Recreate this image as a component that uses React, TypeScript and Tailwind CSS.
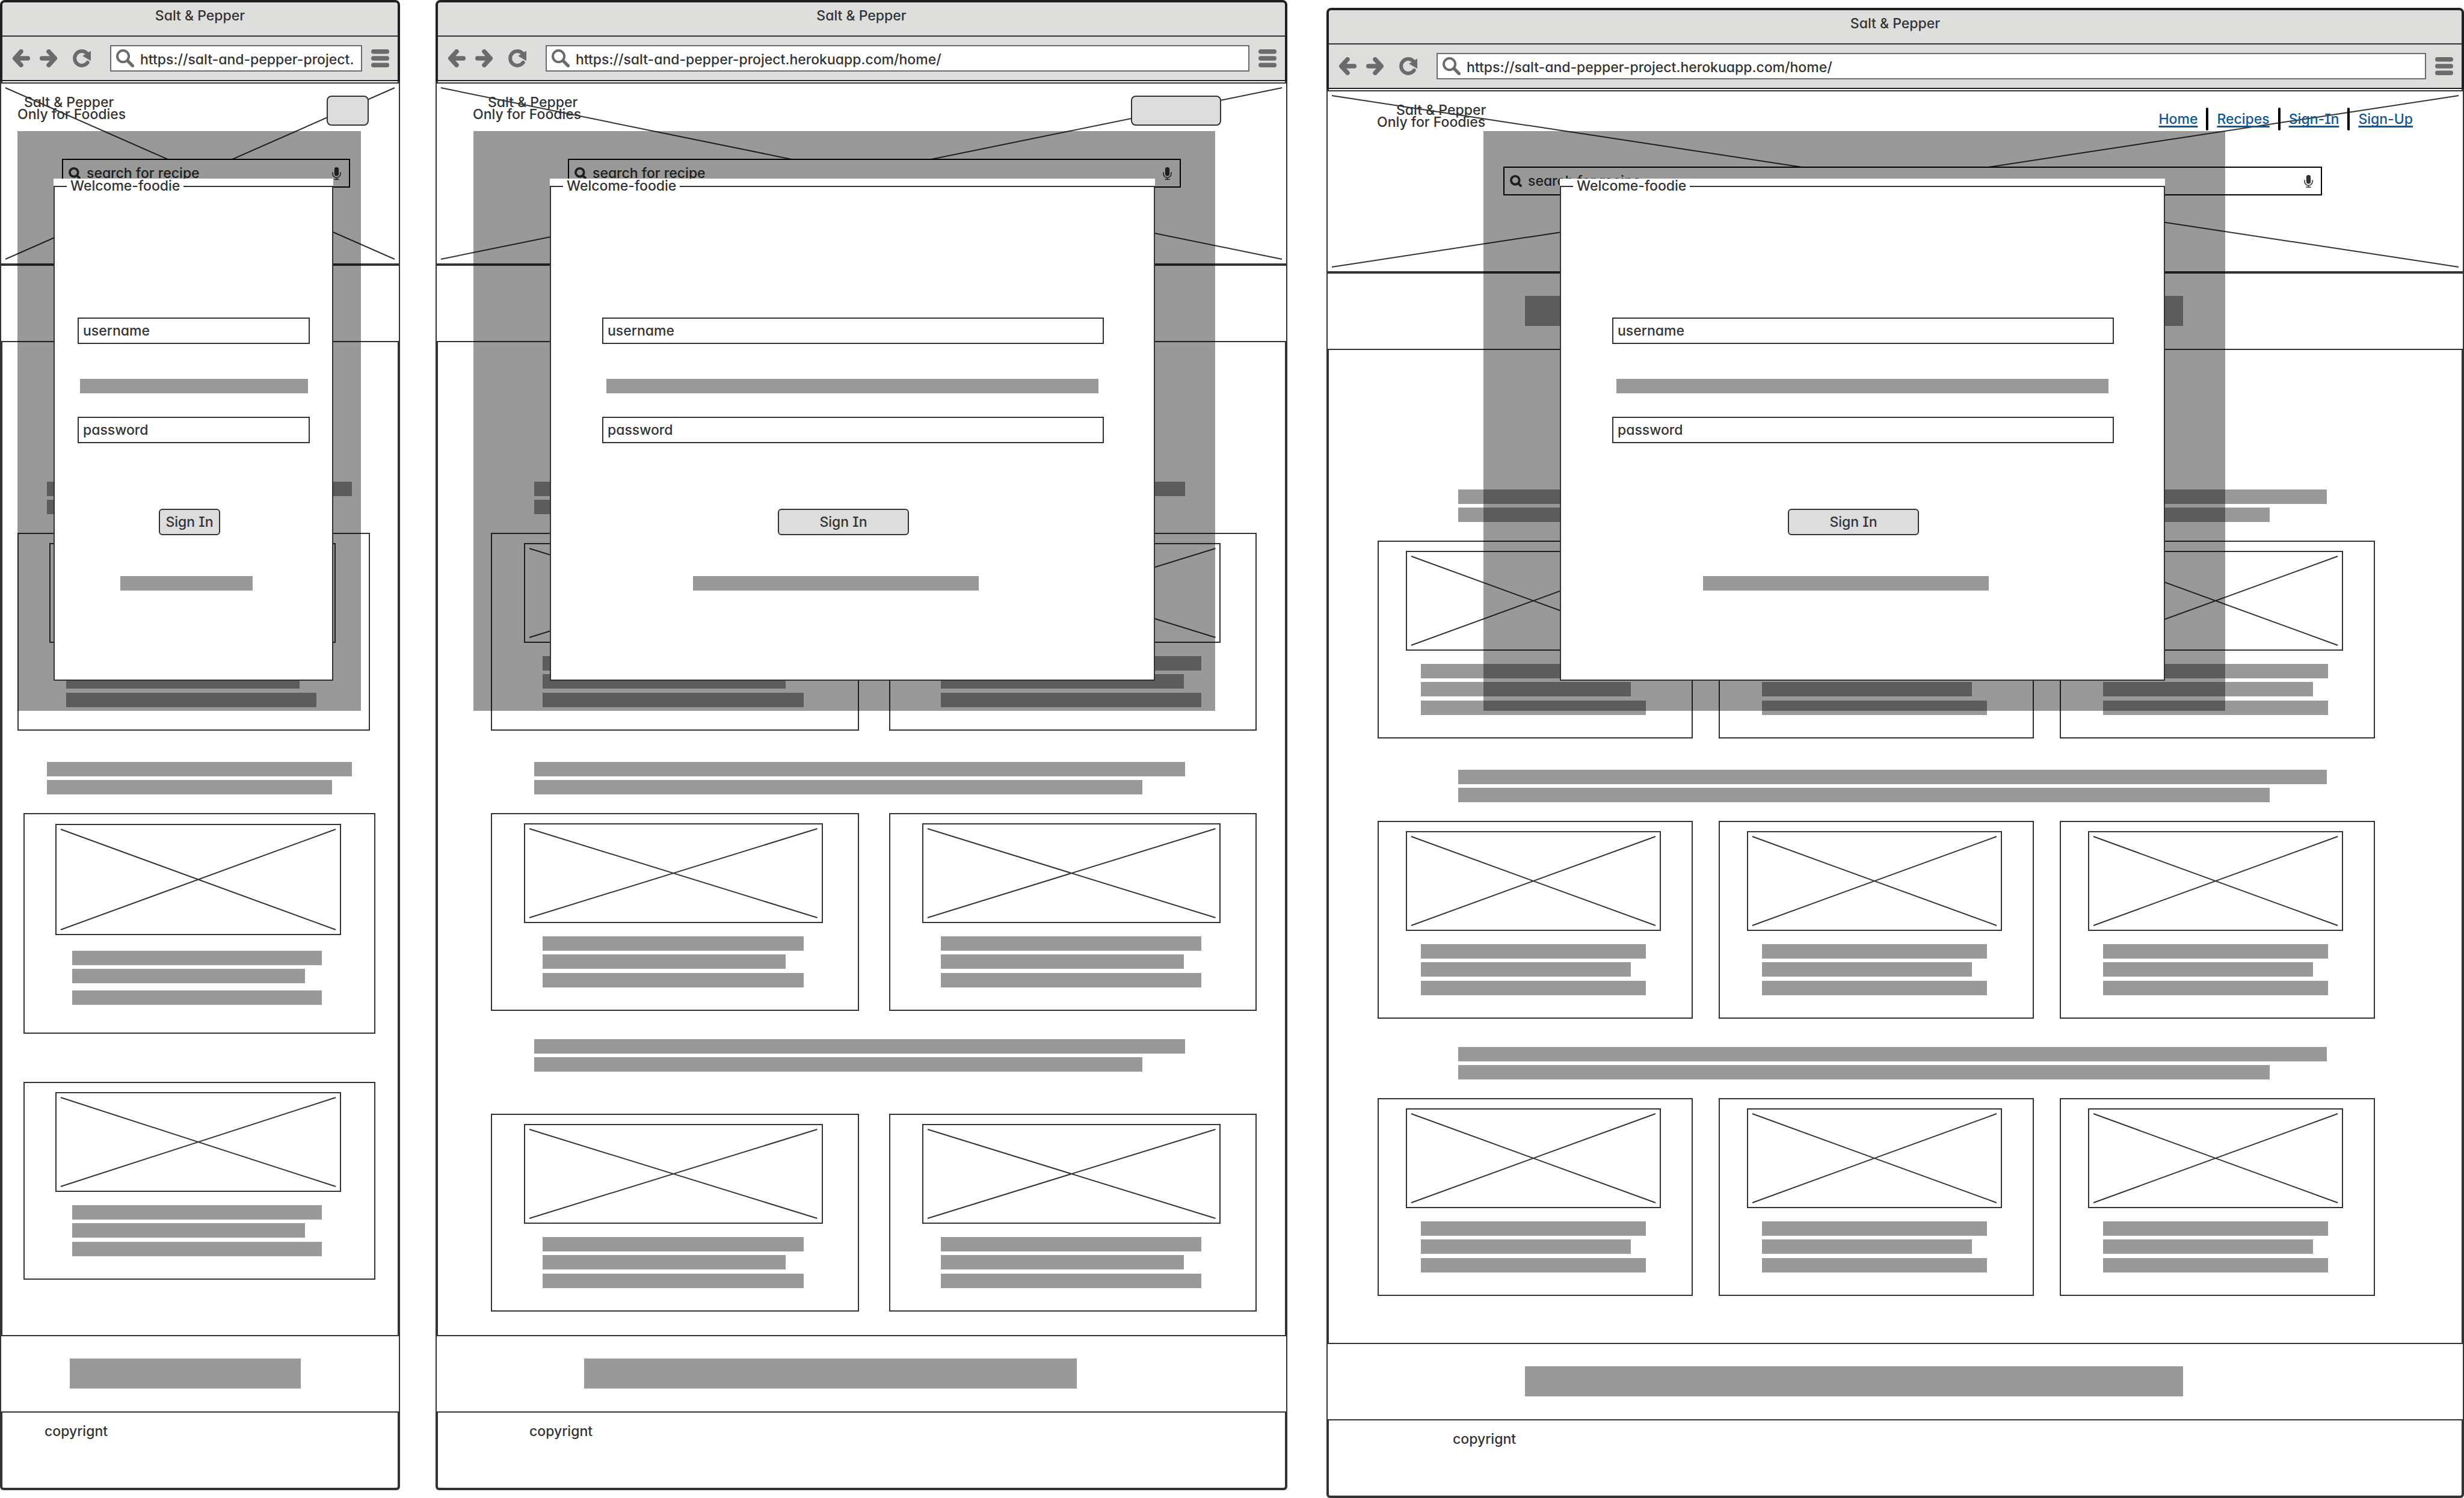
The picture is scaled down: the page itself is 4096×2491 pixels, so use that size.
import type { ReactNode } from 'react';

type Layout = {
  id: string;
  url: string;
  frame: string;
  brand: string;
  brandName: string;
  menuButton: string | null;
  search: string;
  band: string;
  heading: string;
  grids: { grid: string; cards: number; tall?: boolean; heading: boolean }[];
  card: string;
  cardLines: string;
  copyright: string;
  overlay: string;
  form: string;
  legend: string;
  hint: string;
  signIn: string;
  forgot: string;
};

const FULL_URL = 'https://salt-and-pepper-project.herokuapp.com/home/';

const LAYOUTS: Layout[] = [
  {
    id: 'mobile',
    url: 'https://salt-and-pepper-project.',
    frame: 'flex-[665]',
    brand: 'pl-[27px]',
    brandName: 'pl-[11px]',
    menuButton: 'mr-[50px] w-[70px]',
    search: 'ml-[101px] mr-[81px]',
    band: 'ml-[114px] mr-[163px]',
    heading: 'ml-[74px] mr-[76px]',
    grids: [
      { grid: 'mt-[31px] ml-[25px] mr-[46px]', cards: 1, heading: true },
      { grid: 'mt-[31px] ml-[35px] mr-[37px]', cards: 1, tall: true, heading: true },
      { grid: 'mt-[80px] ml-[35px] mr-[37px]', cards: 1, heading: false },
    ],
    card: 'pl-[51px] pr-[55px]',
    cardLines: 'ml-[28px] mr-[32px]',
    copyright: 'pl-[70px]',
    overlay: 'top-[218px] left-[29px] right-[65px] pl-[60px] pr-[46px]',
    form: 'pl-[38px] pr-[37px]',
    legend: '-ml-[18px]',
    hint: 'ml-1 mr-[3px]',
    signIn: 'ml-[135px] w-[102px]',
    forgot: 'ml-[71px] w-[220px]',
  },
  {
    id: 'tablet',
    url: FULL_URL,
    frame: 'flex-[1416] ml-[59px]',
    brand: 'pl-[60px]',
    brandName: 'pl-[25px]',
    menuButton: 'mr-[108px] w-[150px]',
    search: 'ml-[218px] mr-[175px]',
    band: 'ml-[245px] mr-[348px]',
    heading: 'ml-[160px] mr-[166px]',
    grids: [
      { grid: 'mt-[31px] ml-[88px] mr-[47px] grid-cols-2 gap-x-[50px]', cards: 2, heading: true },
      { grid: 'mt-[31px] ml-[88px] mr-[47px] grid-cols-2 gap-x-[50px]', cards: 2, heading: true },
      { grid: 'mt-[70px] ml-[88px] mr-[47px] grid-cols-2 gap-x-[50px]', cards: 2, heading: true },
    ],
    card: 'pl-[53px] pr-[58px]',
    cardLines: 'ml-[31px] mr-[32px]',
    copyright: 'pl-[152px]',
    overlay: 'top-[218px] left-[63px] right-[120px] pl-[127px] pr-[100px]',
    form: 'pl-[85px] pr-[83px]',
    legend: '-ml-[65px]',
    hint: 'ml-[7px] mr-[9px]',
    signIn: 'ml-[292px] w-[218px]',
    forgot: 'ml-[151px] w-[475px]',
  },
  {
    id: 'desktop',
    url: FULL_URL,
    frame: 'flex-[1891] ml-[65px] mt-[13px]',
    brand: 'pl-[82px]',
    brandName: 'pl-[32px]',
    menuButton: null,
    search: 'ml-[292px] mr-[234px]',
    band: 'ml-[328px] mr-[465px]',
    heading: 'ml-[215px] mr-[224px]',
    grids: [
      { grid: 'mt-[31px] ml-[81px] mr-[144px] grid-cols-3 gap-x-[43px]', cards: 3, heading: true },
      { grid: 'mt-[31px] ml-[81px] mr-[144px] grid-cols-3 gap-x-[43px]', cards: 3, heading: true },
      { grid: 'mt-[31px] ml-[81px] mr-[144px] grid-cols-3 gap-x-[43px]', cards: 3, heading: true },
    ],
    card: 'pl-[45px] pr-[51px]',
    cardLines: 'ml-[25px] mr-[25px]',
    copyright: 'pl-[206px]',
    overlay: 'top-[205px] left-[261px] right-[397px] pl-[127px] pr-[100px]',
    form: 'pl-[85px] pr-[83px]',
    legend: '-ml-[65px]',
    hint: 'ml-[7px] mr-[9px]',
    signIn: 'ml-[292px] w-[218px]',
    forgot: 'ml-[151px] w-[475px]',
  },
];

function BackIcon() {
  return (
    <svg viewBox="0 0 32 32" className="size-[30px]" fill="none" stroke="#6b6b6b" strokeWidth="8" strokeLinecap="round" strokeLinejoin="round">
      <path d="M16 4 5 16l11 12M6 16h22" />
    </svg>
  );
}

function ForwardIcon() {
  return (
    <svg viewBox="0 0 32 32" className="size-[30px]" fill="none" stroke="#6b6b6b" strokeWidth="8" strokeLinecap="round" strokeLinejoin="round">
      <path d="M16 4 27 16 16 28M26 16H4" />
    </svg>
  );
}

function ReloadIcon() {
  return (
    <svg viewBox="0 0 32 32" className="size-[30px]">
      <path d="M25 7A12.7 12.7 0 1 0 26.3 23.5" fill="none" stroke="#6b6b6b" strokeWidth="6.4" strokeLinecap="round" />
      <path d="M32 2.6v17.8L17.3 11.6z" fill="#6b6b6b" />
    </svg>
  );
}

function MenuIcon() {
  return (
    <svg viewBox="0 0 32 32" className="size-[30px]" fill="#6b6b6b">
      <rect width="32" height="8" rx="4" />
      <rect y="12" width="32" height="8" rx="4" />
      <rect y="24" width="32" height="8" rx="4" />
    </svg>
  );
}

function AddressIcon() {
  return (
    <svg viewBox="0 0 32 32" className="size-[30px] shrink-0" fill="none" stroke="#6b6b6b" strokeLinecap="round">
      <circle cx="12.3" cy="12.3" r="10.2" strokeWidth="4.2" />
      <path d="m21 21 8.2 8.2" strokeWidth="5.6" />
    </svg>
  );
}

function SearchIcon() {
  return (
    <svg viewBox="0 0 22 22" className="size-[20px] shrink-0" fill="none" stroke="#333" strokeLinecap="round">
      <circle cx="9.7" cy="9.7" r="7.6" strokeWidth="4.2" />
      <path d="m15.5 15.5 4.2 4.2" strokeWidth="4.4" />
    </svg>
  );
}

function MicIcon() {
  return (
    <svg viewBox="0 0 16 23" className="h-[21px] w-[15px] shrink-0" fill="none" stroke="#333" strokeWidth="1.7">
      <rect x="4" width="8" height="16" rx="4" fill="#333" stroke="none" />
      <path d="M.9 9v3a7.1 7.1 0 0 0 14.2 0V9M8 19v3M3.5 22.1h9" />
    </svg>
  );
}

function Cross() {
  return (
    <svg
      viewBox="0 0 100 100"
      preserveAspectRatio="none"
      className="absolute inset-[7px] h-[calc(100%-14px)] w-[calc(100%-14px)] overflow-visible"
      stroke="#333"
      strokeWidth="2"
    >
      <path d="M0 0 100 100M0 100 100 0" fill="none" vectorEffect="non-scaling-stroke" />
    </svg>
  );
}

function Line({ className = '' }: { className?: string }) {
  return <div className={`h-[24px] bg-[#999] ${className}`} />;
}

function Chrome({ url, id }: { url: string; id: string }) {
  return (
    <header className="rounded-t-lg border-x-4 border-t-4 border-b-2 border-[#231f20] bg-[#dededc]">
      <h2 className="h-[57px] border-b-2 border-[#333] text-center leading-[44px]">Salt &amp; Pepper</h2>
      <div className="flex h-[72px] items-center pr-[14px] pl-4">
        <button type="button" aria-label="Back" className="mr-4">
          <BackIcon />
        </button>
        <button type="button" aria-label="Forward" className="mr-[25px]">
          <ForwardIcon />
        </button>
        <button type="button" aria-label="Reload" className="mr-8">
          <ReloadIcon />
        </button>
        <label htmlFor={`${id}-address`} className="flex h-[44px] min-w-0 flex-1 items-center border-2 border-[#6b6b6b] bg-white pl-2">
          <AddressIcon />
          <input
            id={`${id}-address`}
            aria-label="Address"
            defaultValue={url}
            className="ml-[10px] min-w-0 flex-1 bg-transparent pt-1 outline-none"
          />
        </label>
        <button type="button" aria-label="Menu" className="ml-[15px]">
          <MenuIcon />
        </button>
      </div>
    </header>
  );
}

function Divider() {
  return <span className="h-[38px] w-[4px] rounded-full bg-black" />;
}

function NavLink({ children }: { children: ReactNode }) {
  return (
    <a
      href="#"
      className="text-[#0b5799] underline decoration-[3px] underline-offset-[3px] [text-decoration-skip-ink:none]"
    >
      {children}
    </a>
  );
}

function Hero({ layout }: { layout: Layout }) {
  return (
    <div className="relative h-[303px] border-2 border-[#333] bg-white">
      <Cross />
      <div className="relative flex h-[125px] items-start justify-between">
        <div className={`pt-[21px] leading-[20px] ${layout.brand}`}>
          <h1 className={layout.brandName}>Salt &amp; Pepper</h1>
          <p>Only for Foodies</p>
        </div>
        {layout.menuButton ? (
          <button
            type="button"
            aria-label="Open navigation"
            className={`mt-5 h-[50px] rounded-lg border-2 border-[#333] bg-[#ddd] ${layout.menuButton}`}
          />
        ) : (
          <nav className="mt-[27px] mr-[83px] flex items-center gap-x-[14px]">
            <NavLink>Home</NavLink>
            <Divider />
            <NavLink>Recipes</NavLink>
            <Divider />
            <NavLink>Sign-In</NavLink>
            <Divider />
            <NavLink>Sign-Up</NavLink>
          </nav>
        )}
      </div>
      <label
        htmlFor={`${layout.id}-search`}
        className={`relative flex h-[48px] items-center border-2 border-black bg-white pr-[13px] pl-[9px] ${layout.search}`}
      >
        <SearchIcon />
        <input
          id={`${layout.id}-search`}
          type="text"
          aria-label="Search"
          placeholder="search for recipe"
          className="ml-[10px] min-w-0 flex-1 bg-transparent outline-none placeholder:text-[#333] placeholder:opacity-100"
        />
        <MicIcon />
      </label>
    </div>
  );
}

function Band({ className }: { className: string }) {
  return (
    <div className="h-[129px] border-2 border-[#333] bg-white pt-[37px]">
      <div className={`h-[50px] bg-[#999] ${className}`} />
    </div>
  );
}

function Card({ layout, tall }: { layout: Layout; tall?: boolean }) {
  return (
    <article className={`border-2 border-[#333] ${tall ? 'pt-4 pb-[46px]' : 'pt-[15px] pb-[37px]'} ${layout.card}`}>
      <div className={`relative border-2 border-[#333] ${tall ? 'h-[185px]' : 'h-[166px]'}`}>
        <Cross />
      </div>
      <div className={`${tall ? 'mt-[26px]' : 'mt-[22px]'} ${layout.cardLines}`}>
        <Line />
        <Line className="mt-[6px] w-[93.3%]" />
        <Line className={tall ? 'mt-[12px]' : 'mt-[7px]'} />
      </div>
    </article>
  );
}

function SignInDialog({ layout }: { layout: Layout }) {
  const field =
    'h-[44px] w-full border-2 border-[#333] bg-white pl-[7px] outline-none placeholder:text-[#333] placeholder:opacity-100';
  return (
    <div className={`absolute bg-black/40 pt-[79px] pb-[50px] ${layout.overlay}`}>
      <form className="bg-white" role="dialog" aria-label="Welcome-foodie">
        <fieldset className={`min-w-0 border-2 border-[#333] pb-[148px] ${layout.form}`}>
          <legend className={`px-[6px] pb-[2px] leading-[24px] ${layout.legend}`}>Welcome-foodie</legend>
          <input type="text" aria-label="username" placeholder="username" className={`mt-[205px] ${field}`} />
          <Line className={`mt-[58px] ${layout.hint}`} />
          <input type="text" aria-label="password" placeholder="password" className={`mt-[39px] ${field}`} />
          <button
            type="button"
            className={`mt-[109px] block h-[44px] rounded-md border-2 border-[#333] bg-[#ddd] whitespace-nowrap ${layout.signIn}`}
          >
            Sign In
          </button>
          <Line className={`mt-[68px] ${layout.forgot}`} />
        </fieldset>
      </form>
    </div>
  );
}

function Screen({ layout }: { layout: Layout }) {
  return (
    <section className={`relative flex min-w-0 flex-col ${layout.frame}`}>
      <Chrome url={layout.url} id={layout.id} />
      <div className="h-[2px] border-x-4 border-[#333]" />
      <Hero layout={layout} />
      <Band className={layout.band} />
      <main className="h-[1651px] border-x-4 border-[#333] pt-[232px]">
        {layout.grids.map((g, i) => (
          <div key={i} className={i === 0 ? '' : i === 1 ? 'mt-[52px]' : g.heading ? 'mt-[47px]' : ''}>
            {g.heading && (
              <div className={layout.heading}>
                <Line />
                <Line className="mt-[6px] w-[93.4%]" />
              </div>
            )}
            <div className={`grid ${g.grid}`}>
              {Array.from({ length: g.cards }, (_, n) => (
                <Card key={n} layout={layout} tall={g.tall} />
              ))}
            </div>
          </div>
        ))}
      </main>
      <Band className={layout.band} />
      <footer className={`h-[129px] rounded-b-md border-x-4 border-b-4 border-[#333] pt-[19px] leading-[24px] ${layout.copyright}`}>
        copyrignt
      </footer>
      <SignInDialog layout={layout} />
    </section>
  );
}

export default function App() {
  return (
    <div className="flex items-start bg-white font-['Inter',sans-serif] text-[23px] leading-[28px] font-medium text-[#333] [font-feature-settings:'cv11','cv08']">
      {LAYOUTS.map((layout) => (
        <Screen key={layout.id} layout={layout} />
      ))}
    </div>
  );
}
